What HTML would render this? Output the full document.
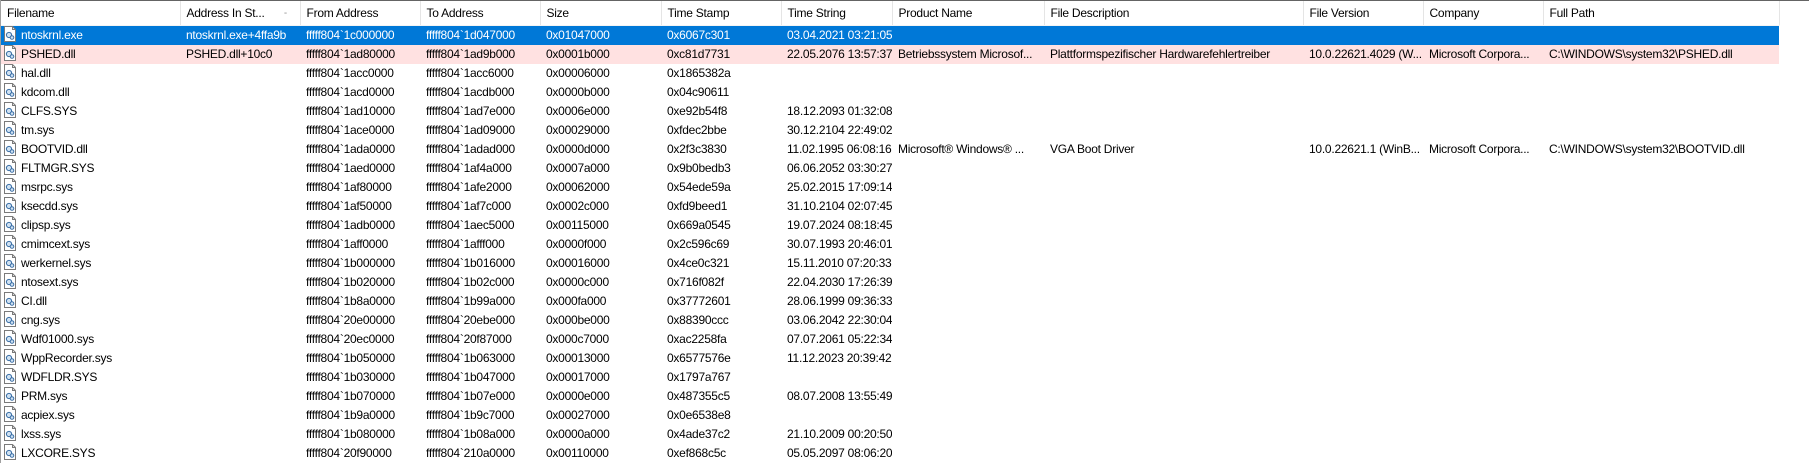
<!DOCTYPE html>
<html><head><meta charset="utf-8"><style>
body{margin:0;width:1809px;height:463px;overflow:hidden;background:#fff;font-family:"Liberation Sans",sans-serif;font-size:12px;letter-spacing:-0.25px;color:#000}
.top{position:absolute;left:0;top:0;width:1809px;height:1px;background:#646464}
.lb{position:absolute;left:0;top:0;width:1px;height:463px;background:#a0a0a0}
table{position:absolute;left:1px;top:1px;border-collapse:collapse;table-layout:fixed;width:1778px}
td,th{white-space:nowrap;overflow:hidden;padding:0 0 0 6px;text-align:left;font-weight:normal}
th{height:24px;border-right:1px solid #e5e5e5;border-bottom:1px solid #f4f4f4;position:relative}
td{height:19px;line-height:19px}
tr.sel td{background:#0078d7;color:#fff}
tr.pk td{background:#ffe1e1}
td:first-child{padding-left:2px}
td:first-child svg{vertical-align:-3px;margin-right:4px}
</style></head><body>
<div class="top"></div><div class="lb"></div>
<svg width="0" height="0" style="position:absolute"><defs>
<symbol id="ic" viewBox="0 0 14 16"><path d="M1.5 .5h8l3 3v12h-11z" fill="#fff" stroke="#7a7a7a"/><path d="M9.5 .5v3h3" fill="none" stroke="#7a7a7a"/><circle cx="6" cy="9" r="2.6" fill="#cfe2f3" stroke="#3a6ea5"/><circle cx="9" cy="11.5" r="1.8" fill="#cfe2f3" stroke="#3a6ea5"/></symbol></defs></svg>
<table>
<colgroup><col style="width:179px"><col style="width:120px"><col style="width:120px"><col style="width:120px"><col style="width:121px"><col style="width:120px"><col style="width:111px"><col style="width:152px"><col style="width:259px"><col style="width:120px"><col style="width:120px"><col style="width:236px"></colgroup>
<tr><th>Filename</th><th>Address In St...<span style="position:absolute;left:103px;top:8px;font-size:8px;color:#999">&#8259;</span></th><th>From Address</th><th>To Address</th><th>Size</th><th>Time Stamp</th><th>Time String</th><th>Product Name</th><th>File Description</th><th>File Version</th><th>Company</th><th>Full Path</th></tr>
<tr class="sel"><td><svg width="14" height="16"><use href="#ic"/></svg><span>ntoskrnl.exe</span></td><td>ntoskrnl.exe+4ffa9b</td><td>fffff804`1c000000</td><td>fffff804`1d047000</td><td>0x01047000</td><td>0x6067c301</td><td>03.04.2021 03:21:05</td><td></td><td></td><td></td><td></td><td></td></tr>
<tr class="pk"><td><svg width="14" height="16"><use href="#ic"/></svg>PSHED.dll</td><td>PSHED.dll+10c0</td><td>fffff804`1ad80000</td><td>fffff804`1ad9b000</td><td>0x0001b000</td><td>0xc81d7731</td><td>22.05.2076 13:57:37</td><td>Betriebssystem Microsof...</td><td>Plattformspezifischer Hardwarefehlertreiber</td><td>10.0.22621.4029 (W...</td><td>Microsoft Corpora...</td><td>C:\WINDOWS\system32\PSHED.dll</td></tr>
<tr><td><svg width="14" height="16"><use href="#ic"/></svg>hal.dll</td><td></td><td>fffff804`1acc0000</td><td>fffff804`1acc6000</td><td>0x00006000</td><td>0x1865382a</td><td></td><td></td><td></td><td></td><td></td><td></td></tr>
<tr><td><svg width="14" height="16"><use href="#ic"/></svg>kdcom.dll</td><td></td><td>fffff804`1acd0000</td><td>fffff804`1acdb000</td><td>0x0000b000</td><td>0x04c90611</td><td></td><td></td><td></td><td></td><td></td><td></td></tr>
<tr><td><svg width="14" height="16"><use href="#ic"/></svg>CLFS.SYS</td><td></td><td>fffff804`1ad10000</td><td>fffff804`1ad7e000</td><td>0x0006e000</td><td>0xe92b54f8</td><td>18.12.2093 01:32:08</td><td></td><td></td><td></td><td></td><td></td></tr>
<tr><td><svg width="14" height="16"><use href="#ic"/></svg>tm.sys</td><td></td><td>fffff804`1ace0000</td><td>fffff804`1ad09000</td><td>0x00029000</td><td>0xfdec2bbe</td><td>30.12.2104 22:49:02</td><td></td><td></td><td></td><td></td><td></td></tr>
<tr><td><svg width="14" height="16"><use href="#ic"/></svg>BOOTVID.dll</td><td></td><td>fffff804`1ada0000</td><td>fffff804`1adad000</td><td>0x0000d000</td><td>0x2f3c3830</td><td>11.02.1995 06:08:16</td><td>Microsoft® Windows® ...</td><td>VGA Boot Driver</td><td>10.0.22621.1 (WinB...</td><td>Microsoft Corpora...</td><td>C:\WINDOWS\system32\BOOTVID.dll</td></tr>
<tr><td><svg width="14" height="16"><use href="#ic"/></svg>FLTMGR.SYS</td><td></td><td>fffff804`1aed0000</td><td>fffff804`1af4a000</td><td>0x0007a000</td><td>0x9b0bedb3</td><td>06.06.2052 03:30:27</td><td></td><td></td><td></td><td></td><td></td></tr>
<tr><td><svg width="14" height="16"><use href="#ic"/></svg>msrpc.sys</td><td></td><td>fffff804`1af80000</td><td>fffff804`1afe2000</td><td>0x00062000</td><td>0x54ede59a</td><td>25.02.2015 17:09:14</td><td></td><td></td><td></td><td></td><td></td></tr>
<tr><td><svg width="14" height="16"><use href="#ic"/></svg>ksecdd.sys</td><td></td><td>fffff804`1af50000</td><td>fffff804`1af7c000</td><td>0x0002c000</td><td>0xfd9beed1</td><td>31.10.2104 02:07:45</td><td></td><td></td><td></td><td></td><td></td></tr>
<tr><td><svg width="14" height="16"><use href="#ic"/></svg>clipsp.sys</td><td></td><td>fffff804`1adb0000</td><td>fffff804`1aec5000</td><td>0x00115000</td><td>0x669a0545</td><td>19.07.2024 08:18:45</td><td></td><td></td><td></td><td></td><td></td></tr>
<tr><td><svg width="14" height="16"><use href="#ic"/></svg>cmimcext.sys</td><td></td><td>fffff804`1aff0000</td><td>fffff804`1afff000</td><td>0x0000f000</td><td>0x2c596c69</td><td>30.07.1993 20:46:01</td><td></td><td></td><td></td><td></td><td></td></tr>
<tr><td><svg width="14" height="16"><use href="#ic"/></svg>werkernel.sys</td><td></td><td>fffff804`1b000000</td><td>fffff804`1b016000</td><td>0x00016000</td><td>0x4ce0c321</td><td>15.11.2010 07:20:33</td><td></td><td></td><td></td><td></td><td></td></tr>
<tr><td><svg width="14" height="16"><use href="#ic"/></svg>ntosext.sys</td><td></td><td>fffff804`1b020000</td><td>fffff804`1b02c000</td><td>0x0000c000</td><td>0x716f082f</td><td>22.04.2030 17:26:39</td><td></td><td></td><td></td><td></td><td></td></tr>
<tr><td><svg width="14" height="16"><use href="#ic"/></svg>CI.dll</td><td></td><td>fffff804`1b8a0000</td><td>fffff804`1b99a000</td><td>0x000fa000</td><td>0x37772601</td><td>28.06.1999 09:36:33</td><td></td><td></td><td></td><td></td><td></td></tr>
<tr><td><svg width="14" height="16"><use href="#ic"/></svg>cng.sys</td><td></td><td>fffff804`20e00000</td><td>fffff804`20ebe000</td><td>0x000be000</td><td>0x88390ccc</td><td>03.06.2042 22:30:04</td><td></td><td></td><td></td><td></td><td></td></tr>
<tr><td><svg width="14" height="16"><use href="#ic"/></svg>Wdf01000.sys</td><td></td><td>fffff804`20ec0000</td><td>fffff804`20f87000</td><td>0x000c7000</td><td>0xac2258fa</td><td>07.07.2061 05:22:34</td><td></td><td></td><td></td><td></td><td></td></tr>
<tr><td><svg width="14" height="16"><use href="#ic"/></svg>WppRecorder.sys</td><td></td><td>fffff804`1b050000</td><td>fffff804`1b063000</td><td>0x00013000</td><td>0x6577576e</td><td>11.12.2023 20:39:42</td><td></td><td></td><td></td><td></td><td></td></tr>
<tr><td><svg width="14" height="16"><use href="#ic"/></svg>WDFLDR.SYS</td><td></td><td>fffff804`1b030000</td><td>fffff804`1b047000</td><td>0x00017000</td><td>0x1797a767</td><td></td><td></td><td></td><td></td><td></td><td></td></tr>
<tr><td><svg width="14" height="16"><use href="#ic"/></svg>PRM.sys</td><td></td><td>fffff804`1b070000</td><td>fffff804`1b07e000</td><td>0x0000e000</td><td>0x487355c5</td><td>08.07.2008 13:55:49</td><td></td><td></td><td></td><td></td><td></td></tr>
<tr><td><svg width="14" height="16"><use href="#ic"/></svg>acpiex.sys</td><td></td><td>fffff804`1b9a0000</td><td>fffff804`1b9c7000</td><td>0x00027000</td><td>0x0e6538e8</td><td></td><td></td><td></td><td></td><td></td><td></td></tr>
<tr><td><svg width="14" height="16"><use href="#ic"/></svg>lxss.sys</td><td></td><td>fffff804`1b080000</td><td>fffff804`1b08a000</td><td>0x0000a000</td><td>0x4ade37c2</td><td>21.10.2009 00:20:50</td><td></td><td></td><td></td><td></td><td></td></tr>
<tr><td><svg width="14" height="16"><use href="#ic"/></svg>LXCORE.SYS</td><td></td><td>fffff804`20f90000</td><td>fffff804`210a0000</td><td>0x00110000</td><td>0xef868c5c</td><td>05.05.2097 08:06:20</td><td></td><td></td><td></td><td></td><td></td></tr>
</table>
</body></html>
